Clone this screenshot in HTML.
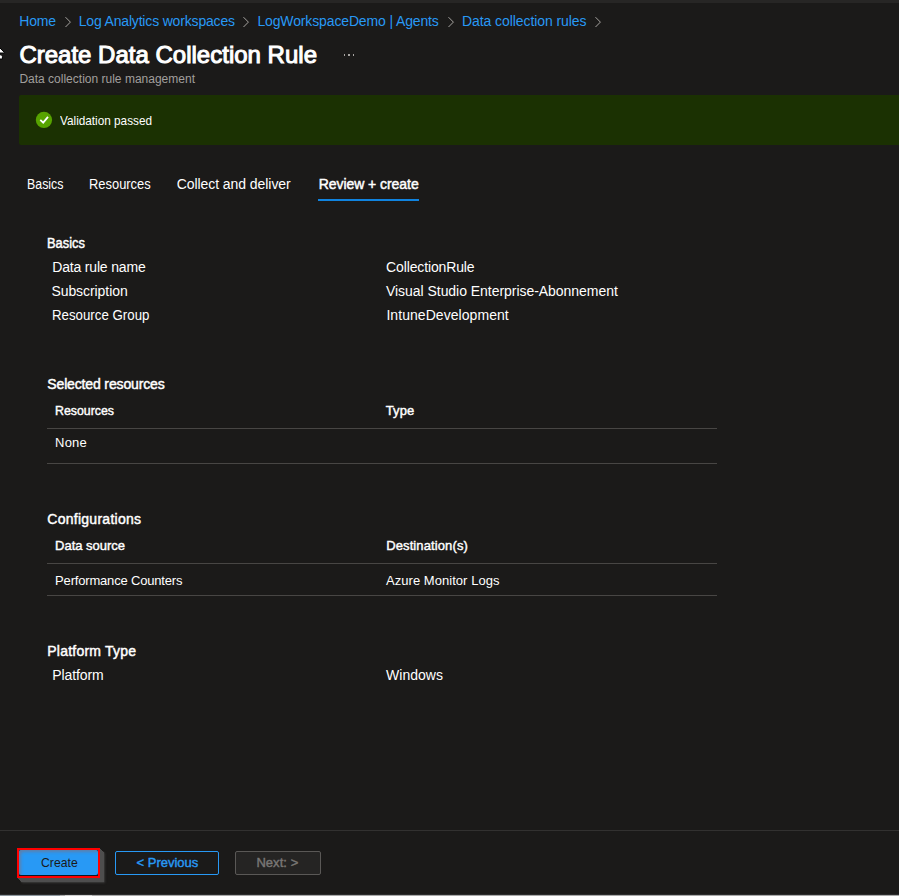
<!DOCTYPE html>
<html><head><meta charset="utf-8"><title>Create Data Collection Rule</title>
<style>
html,body{margin:0;padding:0;}
body{width:899px;height:896px;overflow:hidden;position:relative;background:#1b1a19;font-family:"Liberation Sans",sans-serif;}
.t{position:absolute;white-space:nowrap;line-height:1;}
.ab{position:absolute;}
</style></head><body>

<div class="ab" style="left:0;top:0;width:899px;height:3px;background:#272625"></div>
<div class="ab" style="left:19px;top:95px;width:880px;height:50px;background:#1b3102;border-radius:2px 0 0 2px"></div>
<svg class="ab" style="left:35px;top:111px" width="18" height="18" viewBox="0 0 18 18"><circle cx="8.95" cy="8.95" r="8.15" fill="#57a300"/><path d="M5.3 8.9 L8.2 11.6 L13 5.9" fill="none" stroke="#fff" stroke-width="1.8" stroke-linecap="butt" stroke-linejoin="miter"/></svg>
<svg class="ab" style="left:64.8px;top:16px" width="8" height="12" viewBox="0 0 8 12"><path d="M0.5 1.2 L5.4 6.1 L0.5 11" fill="none" stroke="#a8a5a2" stroke-width="1"/></svg>
<svg class="ab" style="left:242.8px;top:16px" width="8" height="12" viewBox="0 0 8 12"><path d="M0.5 1.2 L5.4 6.1 L0.5 11" fill="none" stroke="#a8a5a2" stroke-width="1"/></svg>
<svg class="ab" style="left:447.8px;top:16px" width="8" height="12" viewBox="0 0 8 12"><path d="M0.5 1.2 L5.4 6.1 L0.5 11" fill="none" stroke="#a8a5a2" stroke-width="1"/></svg>
<svg class="ab" style="left:594.8px;top:16px" width="8" height="12" viewBox="0 0 8 12"><path d="M0.5 1.2 L5.4 6.1 L0.5 11" fill="none" stroke="#a8a5a2" stroke-width="1"/></svg>
<div class="ab" style="left:343.6px;top:54.1px;width:1.8px;height:1.8px;background:#a9a6a3"></div>
<div class="ab" style="left:348.1px;top:54.1px;width:1.8px;height:1.8px;background:#a9a6a3"></div>
<div class="ab" style="left:352.6px;top:54.1px;width:1.8px;height:1.8px;background:#a9a6a3"></div>
<svg class="ab" style="left:0;top:46px" width="7" height="16" viewBox="0 0 7 16"><path d="M-1 2 L0.2 2.2 L4.3 6.4 L4.3 7 L-1 7 Z" fill="#fff" stroke="#000" stroke-width="1"/><path d="M-1 8.8 L1.6 8.8 L2.4 10.5 L2.4 13 L-1 13 Z" fill="#fff" stroke="#000" stroke-width="1"/></svg>
<div class="ab" style="left:318px;top:199px;width:101px;height:2px;background:#1083df"></div>
<div class="ab" style="left:47px;top:428px;width:670px;height:1px;background:#484644"></div>
<div class="ab" style="left:47px;top:463px;width:670px;height:1px;background:#484644"></div>
<div class="ab" style="left:47px;top:563px;width:670px;height:1px;background:#484644"></div>
<div class="ab" style="left:47px;top:595px;width:670px;height:1px;background:#484644"></div>
<div class="ab" style="left:0;top:830px;width:899px;height:1px;background:#323130"></div>
<div class="ab" style="left:17px;top:848px;width:83px;height:30px;background:#ff0000;box-shadow:1px 1px 0 #4e4e4e,2px 2px 0 #4e4e4e,3px 3px 0 #4e4e4e,4px 4px 1px #4e4e4e,5px 5px 2px rgba(78,78,78,.55)"></div>
<div class="ab" style="left:19px;top:850px;width:79px;height:26px;background:#0d1a26"></div>
<div class="ab" style="left:19px;top:850.4px;width:79px;height:24.8px;background:#2899f5;border-radius:2px;box-shadow:inset 3px 3px 3px -1px rgba(110,120,150,.75)"></div>
<div class="ab" style="left:115px;top:851px;width:102px;height:22px;border:1px solid #2899f5;border-radius:2px"></div>
<div class="ab" style="left:235px;top:851px;width:84px;height:22px;border:1px solid #5a5856;border-radius:2px;background:#252423"></div>
<div class="ab" style="left:0;top:894px;width:899px;height:1px;background:#2c2c2c"></div>
<div class="ab" style="left:0;top:895px;width:899px;height:1px;background:#a9a9a9"></div>
<div class="ab" style="left:0;top:895px;width:60px;height:1px;background:#8d979e"></div>
<div class="ab" style="left:65px;top:895px;width:27px;height:1px;background:#cfcfcf"></div>
<span class="t" id="bc1" style="left:19.30px;top:14.15px;font-size:14px;color:#2899f5;letter-spacing:-0.188px">Home</span>
<span class="t" id="bc2" style="left:78.70px;top:14.15px;font-size:14px;color:#2899f5;letter-spacing:-0.171px">Log Analytics workspaces</span>
<span class="t" id="bc3" style="left:257.40px;top:14.15px;font-size:14px;color:#2899f5;letter-spacing:-0.135px">LogWorkspaceDemo | Agents</span>
<span class="t" id="bc4" style="left:462.00px;top:14.15px;font-size:14px;color:#2899f5;letter-spacing:-0.076px">Data collection rules</span>
<span class="t" id="title" style="left:19.40px;top:43.38px;font-size:24px;color:#ffffff;letter-spacing:0.004px;-webkit-text-stroke:1.03px #ffffff">Create Data Collection Rule</span>
<span class="t" id="sub" style="left:19.40px;top:72.94px;font-size:12px;color:#a19f9d;letter-spacing:0.005px">Data collection rule management</span>
<span class="t" id="val" style="left:60.00px;top:114.00px;font-size:13px;color:#ffffff;letter-spacing:0.000px;transform-origin:0 0;transform:scaleX(0.9049)">Validation passed</span>
<span class="t" id="tab1" style="left:27.10px;top:177.45px;font-size:14px;color:#ffffff;letter-spacing:0.000px;transform-origin:0 0;transform:scaleX(0.8852)">Basics</span>
<span class="t" id="tab2" style="left:89.30px;top:177.45px;font-size:14px;color:#ffffff;letter-spacing:0.000px;transform-origin:0 0;transform:scaleX(0.9220)">Resources</span>
<span class="t" id="tab3" style="left:176.70px;top:177.45px;font-size:14px;color:#ffffff;letter-spacing:-0.063px">Collect and deliver</span>
<span class="t" id="tab4" style="left:318.70px;top:177.45px;font-size:14px;color:#ffffff;letter-spacing:-0.054px;-webkit-text-stroke:0.45px #ffffff">Review + create</span>
<span class="t" id="h1" style="left:47.30px;top:235.95px;font-size:14px;color:#ffffff;letter-spacing:0.000px;transform-origin:0 0;transform:scaleX(0.9191);-webkit-text-stroke:0.45px #ffffff">Basics</span>
<span class="t" id="l1" style="left:52.20px;top:259.75px;font-size:14px;color:#ffffff;letter-spacing:-0.172px">Data rule name</span>
<span class="t" id="l2" style="left:51.40px;top:283.75px;font-size:14px;color:#ffffff;letter-spacing:-0.065px">Subscription</span>
<span class="t" id="l3" style="left:52.20px;top:307.85px;font-size:14px;color:#ffffff;letter-spacing:0.000px;transform-origin:0 0;transform:scaleX(0.9482)">Resource Group</span>
<span class="t" id="v1" style="left:386.10px;top:259.75px;font-size:14px;color:#ffffff;letter-spacing:-0.139px">CollectionRule</span>
<span class="t" id="v2" style="left:386.00px;top:283.75px;font-size:14px;color:#ffffff;letter-spacing:-0.041px">Visual Studio Enterprise-Abonnement</span>
<span class="t" id="v3" style="left:386.40px;top:307.85px;font-size:14px;color:#ffffff;letter-spacing:0.059px">IntuneDevelopment</span>
<span class="t" id="h2" style="left:47.30px;top:377.05px;font-size:14px;color:#ffffff;letter-spacing:-0.145px;-webkit-text-stroke:0.45px #ffffff">Selected resources</span>
<span class="t" id="th1" style="left:55.10px;top:404.20px;font-size:13px;color:#ffffff;letter-spacing:0.000px;transform-origin:0 0;transform:scaleX(0.9495);-webkit-text-stroke:0.42px #ffffff">Resources</span>
<span class="t" id="th2" style="left:385.80px;top:404.20px;font-size:13px;color:#ffffff;letter-spacing:0.089px;-webkit-text-stroke:0.42px #ffffff">Type</span>
<span class="t" id="td1" style="left:55.10px;top:436.20px;font-size:13px;color:#ffffff;letter-spacing:0.149px">None</span>
<span class="t" id="h3" style="left:47.30px;top:512.05px;font-size:14px;color:#ffffff;letter-spacing:0.268px;-webkit-text-stroke:0.45px #ffffff">Configurations</span>
<span class="t" id="th3" style="left:55.10px;top:539.20px;font-size:13px;color:#ffffff;letter-spacing:-0.018px;-webkit-text-stroke:0.42px #ffffff">Data source</span>
<span class="t" id="th4" style="left:386.20px;top:539.20px;font-size:13px;color:#ffffff;letter-spacing:0.111px;-webkit-text-stroke:0.42px #ffffff">Destination(s)</span>
<span class="t" id="td2" style="left:55.10px;top:574.10px;font-size:13px;color:#ffffff;letter-spacing:-0.179px">Performance Counters</span>
<span class="t" id="td3" style="left:386.00px;top:574.10px;font-size:13px;color:#ffffff;letter-spacing:0.044px">Azure Monitor Logs</span>
<span class="t" id="h4" style="left:47.30px;top:643.65px;font-size:14px;color:#ffffff;letter-spacing:0.214px;-webkit-text-stroke:0.45px #ffffff">Platform Type</span>
<span class="t" id="l4" style="left:52.20px;top:667.65px;font-size:14px;color:#ffffff;letter-spacing:-0.097px">Platform</span>
<span class="t" id="v4" style="left:386.00px;top:667.65px;font-size:14px;color:#ffffff;letter-spacing:0.031px">Windows</span>
<span class="t" id="b1" style="left:40.50px;top:855.70px;font-size:13px;color:#1b1a19;letter-spacing:0.000px;transform-origin:0 0;transform:scaleX(0.9403)">Create</span>
<span class="t" id="b2" style="left:136.60px;top:856.20px;font-size:13px;color:#2899f5;letter-spacing:-0.021px;-webkit-text-stroke:0.42px #2899f5">&lt; Previous</span>
<span class="t" id="b3" style="left:256.40px;top:856.20px;font-size:13px;color:#797775;letter-spacing:0.054px;-webkit-text-stroke:0.42px #797775">Next: &gt;</span>
</body></html>
